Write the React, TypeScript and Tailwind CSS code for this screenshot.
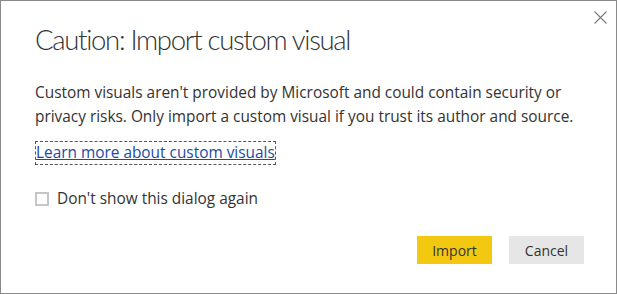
import React from 'react';

const App: React.FC = () => {
  return (
    <div className="w-[617px] h-[294px] bg-white border border-[#8a8a8a] relative flex flex-col pl-[34px] pr-[40px] text-[#333333]" style={{ fontFamily: '"Open Sans", "Noto Sans", sans-serif' }}>
      {/* Close button */}
      <button className="absolute top-[8px] right-[8px] w-[16px] h-[16px] flex items-center justify-center">
        <svg width="13" height="13" viewBox="0 0 13 13">
          <path d="M0.5 0.5 L12.5 12.5 M12.5 0.5 L0.5 12.5" stroke="#7a7a7a" strokeWidth="1.1" fill="none" />
        </svg>
      </button>

      <h1 className="mt-[21px] text-[27.5px] leading-[36px] font-light tracking-[-1.3px] text-[#333333]" style={{ fontFamily: 'Lato, "Open Sans", sans-serif' }}>
        Caution: Import custom visual
      </h1>

      <p className="mt-[23px] text-[15.4px] leading-[24px]">
        Custom visuals aren't provided by Microsoft and could contain security or privacy risks. Only import a custom visual if you trust its author and source.
      </p>

      <div className="mt-[12px] flex">
        <a href="#" className="text-[15.4px] leading-[22px] text-[#1b4aa6] underline border border-dashed border-[#555555]">
          Learn more about custom visuals
        </a>
      </div>

      <label className="mt-[24px] flex items-center gap-[8px] text-[15.4px] leading-[20px]">
        <span className="w-[14px] h-[14px] border-2 border-[#c6c6c6] bg-white inline-block" />
        Don't show this dialog again
      </label>

      <div className="mt-auto mb-[29px] flex justify-end gap-[17px]">
        <button className="w-[75px] h-[28px] bg-[#f2c811] text-[14px] text-[#333333]">Import</button>
        <button className="w-[75px] h-[28px] bg-[#e6e6e6] text-[14px] text-[#333333] mr-[-8px]">Cancel</button>
      </div>
    </div>
  );
};

export default App;
